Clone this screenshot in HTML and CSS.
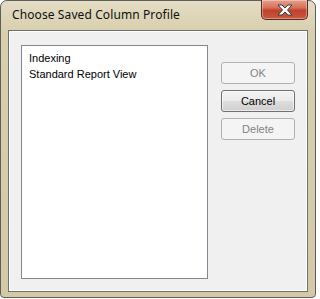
FILE: index.html
```html
<!DOCTYPE html>
<html>
<head>
<meta charset="utf-8">
<link rel="stylesheet" href="styles.css">
</head>
<body>
<div class="window">
  <div class="titlebar">
    <span class="title">Choose Saved Column Profile</span>
    <div class="close">
      <svg width="18" height="12" viewBox="0 0 18 12">
        <path d="M2 1 L6 1 L9 4 L12 1 L16 1 L11.5 6 L16 11 L12 11 L9 8 L6 11 L2 11 L6.5 6 Z" fill="#ffffff" stroke="#3c3c3c" stroke-width="1" stroke-linejoin="round"/>
      </svg>
    </div>
  </div>
  <div class="client">
    <div class="listbox">
      <div class="item">Indexing</div>
      <div class="item">Standard Report View</div>
    </div>
    <div class="buttons">
      <div class="btn disabled">OK</div>
      <div class="btn">Cancel</div>
      <div class="btn disabled">Delete</div>
    </div>
  </div>
</div>
</body>
</html>
```
FILE: styles.css
```css
html, body {
  margin: 0;
  padding: 0;
  background: #ffffff;
}
body {
  font-family: "Liberation Sans", Arial, sans-serif;
  font-size: 11px;
}
.window {
  box-sizing: border-box;
  width: 316px;
  height: 298px;
  border: 1px solid #5e5e5e;
  border-radius: 7px 7px 4px 4px;
  background: linear-gradient(to bottom, #e4ddc4 0px, #d8cfae 30px, #d3c9a6 100%);
  display: flex;
  flex-direction: column;
  padding: 0 7px 5px 7px;
}
.titlebar {
  height: 29px;
  display: flex;
  align-items: flex-start;
  justify-content: space-between;
  flex-shrink: 0;
}
.title {
  font-family: "Noto Sans", sans-serif;
  font-size: 12px;
  color: #101010;
  margin-top: 5px;
  margin-left: 4px;
  letter-spacing: 0.1px;
}
.close {
  box-sizing: border-box;
  width: 47px;
  height: 20px;
  margin-top: -1px;
  border: 1px solid #5a2a22;
  border-top: none;
  border-radius: 0 0 5px 5px;
  background: linear-gradient(to bottom, #e8a08c 0%, #d8705a 40%, #c0402c 55%, #c75a40 100%);
  box-shadow: inset 0 0 0 1px rgba(255,255,255,0.35);
  display: flex;
  align-items: center;
  justify-content: center;
}
.client {
  flex: 1;
  box-sizing: border-box;
  border: 1px solid #6f6f6f;
  background: #f0f0f0;
  box-shadow: inset 0 0 0 1px #ffffff;
  display: flex;
  align-items: flex-start;
  padding: 14px 0 0 12px;
}
.listbox {
  box-sizing: border-box;
  width: 187px;
  height: 234px;
  background: #ffffff;
  border: 1px solid #828790;
  padding: 4px 0 0 7px;
}
.item {
  height: 16px;
  line-height: 16px;
  color: #000000;
  white-space: nowrap;
}
.buttons {
  display: flex;
  flex-direction: column;
  gap: 6px;
  margin-left: 13px;
  margin-top: 17px;
}
.btn {
  box-sizing: border-box;
  width: 74px;
  height: 22px;
  border: 1px solid #707070;
  border-radius: 3px;
  background: linear-gradient(to bottom, #f2f2f2 0%, #ebebeb 50%, #dddddd 51%, #cfcfcf 100%);
  box-shadow: inset 0 0 0 1px rgba(255,255,255,0.6);
  display: flex;
  align-items: center;
  justify-content: center;
  color: #000000;
}
.btn.disabled {
  border-color: #adb2b5;
  background: #f4f4f4;
  box-shadow: none;
  color: #838383;
}
```
